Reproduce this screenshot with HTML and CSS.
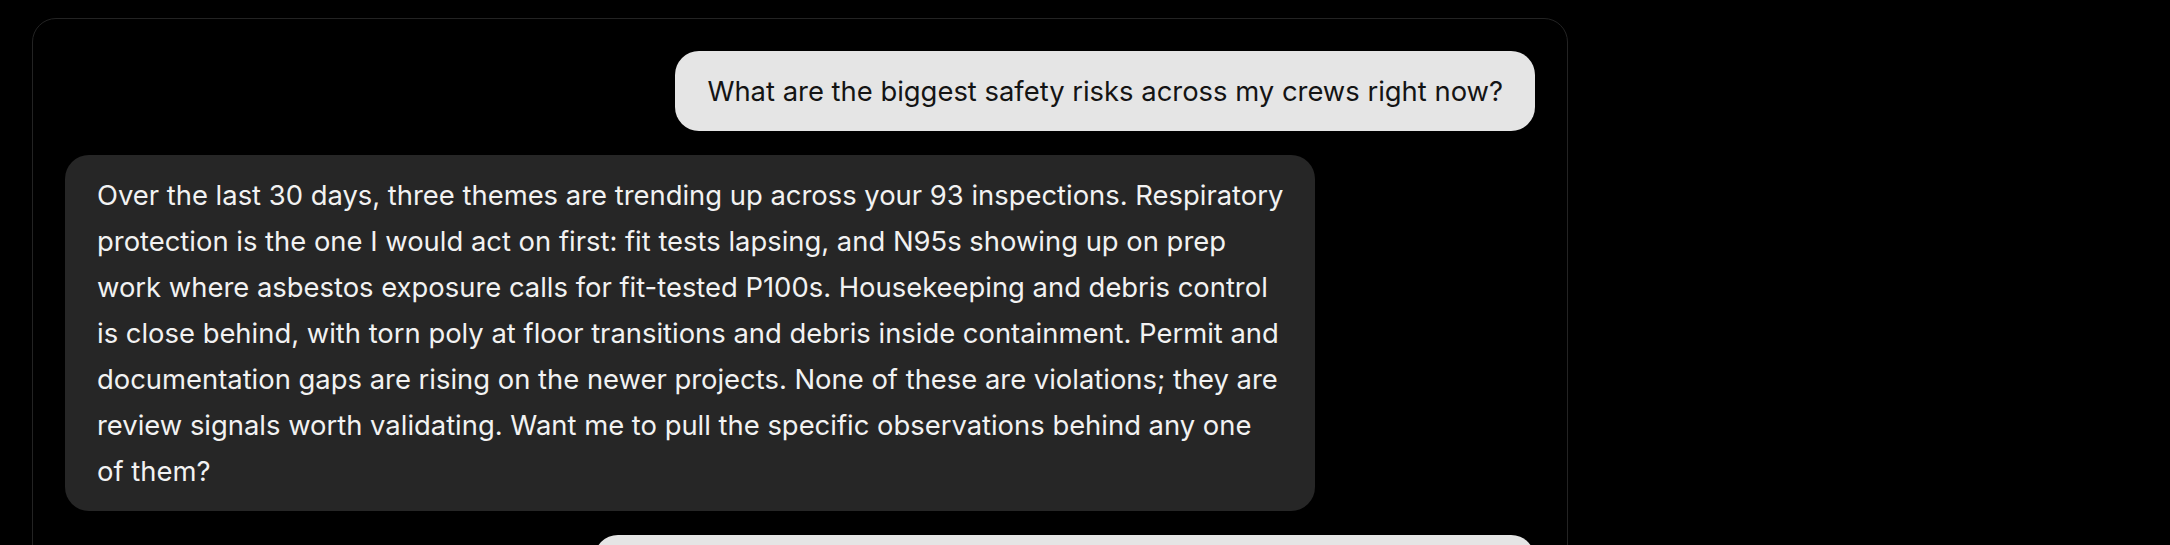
FILE: index.html
```html
<!DOCTYPE html>
<html lang="en">
<head>
    <meta charset="UTF-8">
    <meta name="viewport" content="width=device-width, initial-scale=1.0">
    <title>Safety Assistant</title>
    <link rel="stylesheet" href="styles.css">
</head>
<body>

    <div class="chat">
        <!-- Conversation -->
        <div class="message user">
            What are the biggest safety risks across my crews right now?
        </div>

        <div class="message assistant">
            Over the last 30 days, three themes are trending up across your 93 inspections. Respiratory protection is the one I would act on first: fit tests lapsing, and N95s showing up on prep work where asbestos exposure calls for fit-tested P100s. Housekeeping and debris control is close behind, with torn poly at floor transitions and debris inside containment. Permit and documentation gaps are rising on the newer projects. None of these are violations; they are review signals worth validating. Want me to pull the specific observations behind any one of&nbsp;them?
        </div>

        <div class="message user">
            Yes, pull the respiratory protection observations and group by crew.
        </div>
    </div>

</body>
</html>
```

FILE: styles.css
```css
body {
    font-family: Inter, "Noto Sans", sans-serif;
    background-color: #000;
    margin: 0;
    padding: 18px 32px;
}
.chat {
    width: 1470px;
    display: flex;
    flex-direction: column;
    gap: 24px;
    padding: 32px;
    border: 1px solid #232323;
    border-radius: 24px;
    min-height: 700px;
}
.message {
    max-width: 85%;
    box-sizing: border-box;
    padding: 17px 32px;
    border-radius: 24px;
    font-size: 27.4px;
    line-height: 46px;
}
.user {
    align-self: flex-end;
    background-color: #e5e5e5;
    color: #141414;
}
.assistant {
    align-self: flex-start;
    padding-right: 28px;
    background-color: #262626;
    color: #f2f2f2;
}
```
